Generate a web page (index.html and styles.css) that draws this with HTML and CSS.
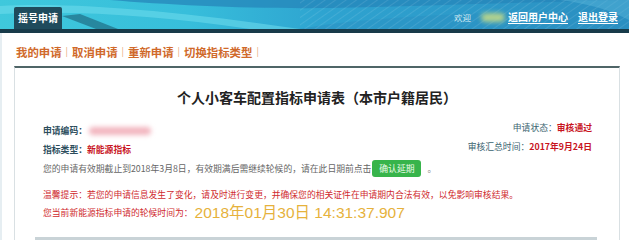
FILE: index.html
```html
<!DOCTYPE html>
<html lang="zh-CN">
<head>
<meta charset="utf-8">
<title>个人小客车配置指标申请表</title>
<link rel="stylesheet" href="styles.css">
</head>
<body>
<header class="top">
  <svg class="top-bg" width="629" height="29" viewBox="0 0 629 29" aria-hidden="true">
    <defs>
      <linearGradient id="hg" x1="0" y1="0" x2="1" y2="0">
        <stop offset="0" stop-color="#3fc8dc"/>
        <stop offset="0.3" stop-color="#37bedb"/>
        <stop offset="0.52" stop-color="#2ea3d0"/>
        <stop offset="1" stop-color="#2b8fc1"/>
      </linearGradient>
      <pattern id="hatch" width="6" height="6" patternUnits="userSpaceOnUse" patternTransform="rotate(-35)">
        <rect width="6" height="1" fill="#ffffff"/>
      </pattern>
    </defs>
    <rect width="629" height="29" fill="url(#hg)"/>
    <path d="M0 6 C 70 2, 170 10, 300 29 L 250 29 C 160 16, 80 10, 0 14 Z" fill="#6fdcec" opacity="0.55"/>
    <path d="M110 0 C 170 5, 250 9, 330 8 C 430 6, 530 2, 629 0 Z" fill="#2585ba" opacity="0.75"/>
    <path d="M62 16 L 80 14 L 118 29 L 96 29 Z" fill="#1f6e84" opacity="0.7"/>
    <path d="M300 29 C 360 18, 460 12, 629 10 L 629 29 Z" fill="#2a8fc2" opacity="0.5"/>
    <rect x="300" width="329" height="29" fill="url(#hatch)" opacity="0.1"/>
    <path d="M560 0 L 629 0 L 629 20 C 610 10, 590 4, 560 0 Z" fill="#5cb8dc" opacity="0.45"/>
  </svg>
  <div class="tab">摇号申请</div>
  <div class="user">
    <span class="welcome">欢迎</span>
    <span class="name-blur"></span>
    <a class="ulink" href="#">返回用户中心</a>
    <a class="ulink" href="#">退出登录</a>
  </div>
</header>

<main class="page">
  <nav class="subnav">
    <a href="#">我的申请</a><span class="sep">|</span><a href="#">取消申请</a><span class="sep">|</span><a href="#">重新申请</a><span class="sep">|</span><a href="#">切换指标类型</a><span class="sep">|</span>
  </nav>

  <section class="box">
    <h1 class="title">个人小客车配置指标申请表（本市户籍居民）</h1>

    <div class="info">
      <div class="row"><span class="lbl">申请编码：</span><span class="code-blur"></span></div>
      <div class="status">
        <div class="srow"><span class="slbl">申请状态：</span><span class="red">审核通过</span></div>
        <div class="srow"><span class="slbl">审核汇总时间：</span><span class="red">2017年9月24日</span></div>
      </div>
      <div class="row"><span class="lbl">指标类型：</span><span class="red">新能源指标</span></div>
      <div class="row wide">您的申请有效期截止到2018年3月8日，有效期满后需继续轮候的，请在此日期前点击<span class="btn">确认延期</span><span class="dot">。</span></div>
    </div>

    <p class="warn">温馨提示：若您的申请信息发生了变化，请及时进行变更，并确保您的相关证件在申请期内合法有效，以免影响审核结果。</p>
    <p class="wait">您当前新能源指标申请的轮候时间为：<span class="time">2018年01月30日 14:31:37.907</span></p>

    <div class="table-head"></div>
  </section>
</main>
</body>
</html>
```

FILE: styles.css
```css
* { box-sizing: border-box; }

html, body {
  margin: 0;
  padding: 0;
  background: #ffffff;
}

body {
  width: 629px;
  height: 240px;
  overflow: hidden;
  font-family: "Noto Sans CJK SC", "Liberation Sans", sans-serif;
  font-size: 8.8px;
  color: #666;
}

/* ---------- header ---------- */
.top {
  position: relative;
  height: 33px;
  border-bottom: 4px solid #183b4a;
  display: flex;
  justify-content: space-between;
  align-items: flex-start;
  padding-left: 14px;
  padding-right: 11px;
}

.top-bg {
  position: absolute;
  left: 0;
  top: 0;
  display: block;
}

.tab {
  position: relative;
  align-self: flex-end;
  height: 22px;
  width: 48px;
  background: #1f4b5c;
  color: #fff;
  font-size: 10px;
  font-weight: bold;
  line-height: 22px;
  text-align: center;
  border-radius: 2px 2px 0 0;
}

.user {
  position: relative;
  margin-top: 11px;
  display: flex;
  align-items: center;
  height: 12px;
  line-height: 12px;
}

.welcome {
  color: #cfe9f2;
  font-size: 8.5px;
}

.name-blur {
  display: inline-block;
  width: 24px;
  height: 9px;
  margin-left: 10px;
  margin-right: 3px;
  background: #b3d38e;
  border-radius: 5px;
  filter: blur(2.5px);
}

.ulink {
  color: #ffffff;
  font-size: 10px;
  font-weight: bold;
  text-decoration: underline;
  text-underline-offset: 2px;
}

.ulink + .ulink { margin-left: 10px; }

/* ---------- page ---------- */
.page {
  border-left: 2px solid #e6eef2;
  height: 207px;
  overflow: hidden;
}

.subnav {
  margin-top: 12px;
  padding-left: 14px;
  height: 14px;
  line-height: 14px;
  display: flex;
  align-items: center;
}

.subnav a {
  color: #d0692a;
  font-size: 11.4px;
  font-weight: bold;
  text-decoration: none;
}

.subnav .sep {
  color: #e7a87c;
  font-size: 9px;
  margin: 0 4px;
}

.box {
  margin-top: 7px;
  margin-left: 12px;
  width: 606px;
  height: 174px;
  overflow: hidden;
  border-top: 2px solid #4f6567;
  border-left: 1px solid #d9e0e3;
  border-right: 1px solid #d9e0e3;
}

.title {
  margin: 19px 0 0;
  text-align: center;
  font-size: 14px;
  line-height: 20px;
  font-weight: bold;
  color: #222;
}

.info {
  margin-top: 14px;
  padding: 0 27px 0 28px;
  display: grid;
  grid-template-columns: 1fr auto;
  grid-auto-rows: 19px;
  line-height: 19px;
}

.row {
  grid-column: 1;
  display: flex;
  align-items: center;
  white-space: nowrap;
}

.row.wide { grid-column: 1 / -1; }

.lbl {
  color: #2c4d5c;
  font-weight: bold;
}

.code-blur {
  display: inline-block;
  width: 62px;
  height: 8px;
  margin-left: 2px;
  background: #f2b4be;
  border-radius: 4px;
  filter: blur(2.5px);
}

.status {
  grid-column: 2;
  grid-row: 1 / 3;
  margin-top: -3px;
  text-align: right;
}

.srow { height: 19px; }

.slbl {
  color: #3a6470;
}

.red {
  color: #c8141e;
  font-weight: bold;
}

.btn {
  display: inline-block;
  height: 17px;
  width: 49px;
  line-height: 17px;
  margin-left: 1px;
  background: #37b44b;
  color: #eafbe9;
  text-align: center;
  border-radius: 3px;
}

.dot {
  margin-left: 6px;
  color: #888;
}

.warn {
  margin: 8px 0 0;
  padding-left: 28px;
  line-height: 18px;
  color: #cf2a2e;
  white-space: nowrap;
}

.wait {
  margin: 0;
  padding-left: 28px;
  line-height: 18px;
  height: 18px;
  color: #cf2a2e;
  white-space: nowrap;
  display: flex;
  align-items: center;
}

.time {
  margin-left: 2px;
  font-family: "Liberation Sans", "Noto Sans CJK SC", sans-serif;
  font-size: 15.5px;
  color: #e6b23c;
}

.table-head {
  margin: 15px 0 0 20px;
  width: 562px;
  height: 6px;
  background: #c9d3d7;
}
```
